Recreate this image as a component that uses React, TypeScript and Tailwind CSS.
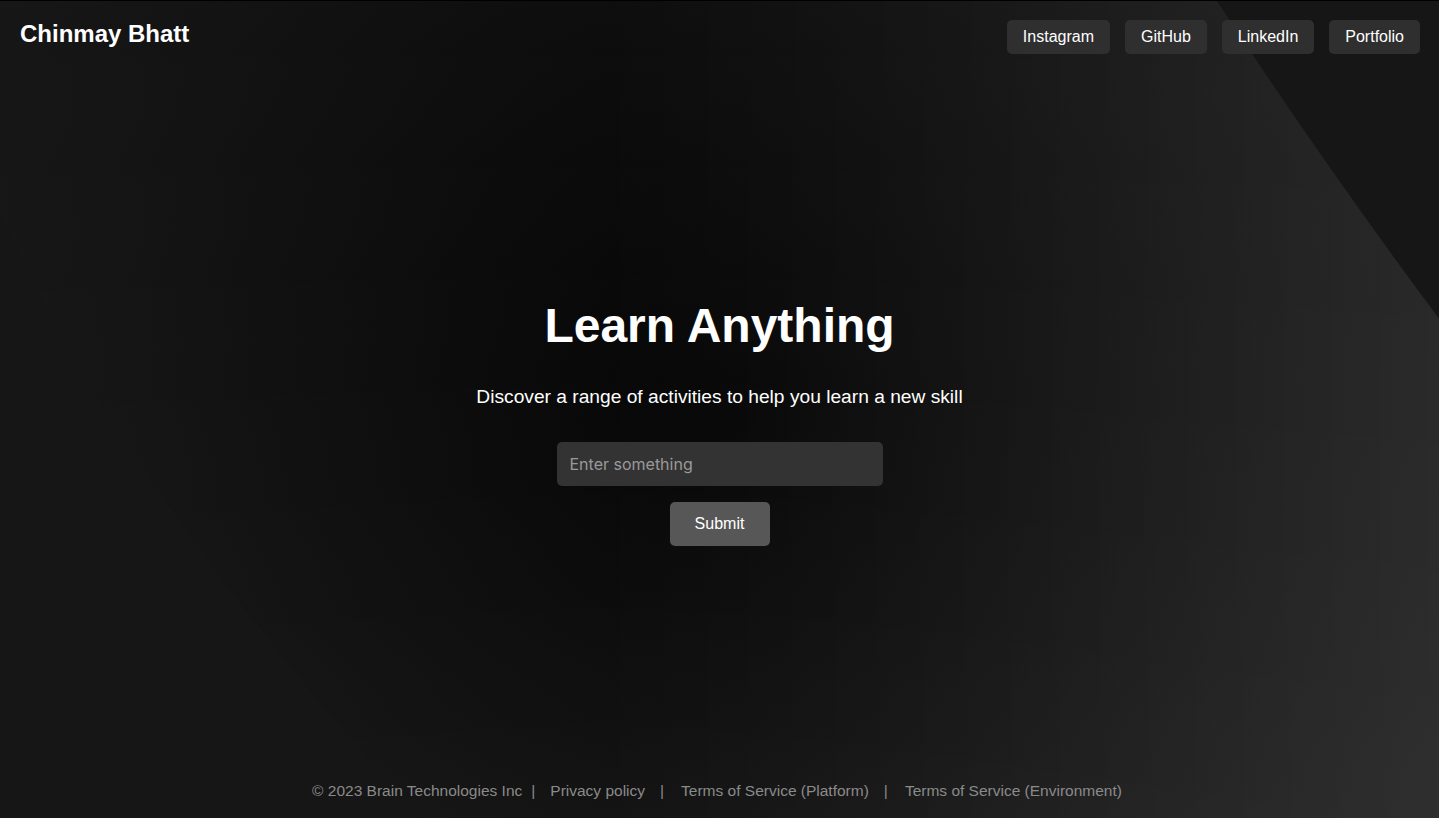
import React from "react";

function Background() {
  return (
    <svg
      className="pointer-events-none absolute inset-0 h-full w-full"
      viewBox="0 0 1439 818"
      preserveAspectRatio="none"
      aria-hidden="true"
    >
      <defs>
        <radialGradient id="rg" gradientUnits="userSpaceOnUse" cx="720" cy="430" r="1000">
          <stop offset="0" stopColor="#020202" />
          <stop offset="0.3" stopColor="#0a0a0a" />
          <stop offset="0.6" stopColor="#121212" />
          <stop offset="1" stopColor="#1a1a1a" />
        </radialGradient>
        <linearGradient id="lg" gradientUnits="userSpaceOnUse" x1="600" y1="0" x2="1439" y2="0">
          <stop offset="0" stopColor="#ffffff" stopOpacity="0" />
          <stop offset="1" stopColor="#ffffff" stopOpacity="0.08" />
        </linearGradient>
        <linearGradient id="lg2" gradientUnits="userSpaceOnUse" x1="0" y1="0" x2="0" y2="818">
          <stop offset="0" stopColor="#ffffff" stopOpacity="0" />
          <stop offset="1" stopColor="#ffffff" stopOpacity="0.03" />
        </linearGradient>
      </defs>
      <rect x="0" y="0" width="1439" height="818" fill="url(#rg)" />
      <rect x="0" y="0" width="1439" height="818" fill="url(#lg)" />
      <rect x="0" y="0" width="1439" height="818" fill="url(#lg2)" />
      <path d="M0,212 Q110,470 420,818 L0,818 Z" fill="#161616" />
      <path d="M1217,0 L1439,0 L1439,318 Q1325,165 1217,0 Z" fill="#161616" />
    </svg>
  );
}

const links = ["Instagram", "GitHub", "LinkedIn", "Portfolio"];

export default function App() {
  return (
    <div className="relative h-screen w-full overflow-hidden border-t border-black bg-[#111111] font-['Liberation_Sans',Arial,sans-serif] text-white">
      <Background />
      <div className="relative flex h-full flex-col">
        <header className="flex items-start justify-between pl-5 pr-[19px] pt-[19px]">
          <div className="pt-[2px] text-[24px] font-bold leading-[24px]">Chinmay Bhatt</div>
          <nav className="flex gap-[15px]">
            {links.map((l) => (
              <a
                key={l}
                href="#"
                className="flex h-[34px] items-center rounded-[5px] bg-[#2f2f2f] px-4 text-[16px] leading-[18px] text-white"
              >
                {l}
              </a>
            ))}
          </nav>
        </header>

        <main className="flex flex-1 flex-col items-center justify-center pt-[7px]">
          <h1 className="text-[48px] font-bold leading-[56px]">Learn Anything</h1>
          <p className="mt-[32px] text-[19.2px] leading-[22px]">
            Discover a range of activities to help you learn a new skill
          </p>
          <input
            type="text"
            placeholder="Enter something"
            className="mt-[34px] h-[44px] w-[326px] rounded-[5px] bg-[#333333] pl-[13px] pr-3 font-['Inter',sans-serif] text-[16px] text-white outline-none placeholder:text-[#9a9a9a]"
          />
          <button className="mt-4 h-[44px] w-[100px] rounded-[5px] bg-[#575757] text-[16px] text-white">
            Submit
          </button>
        </main>

        <footer className="flex justify-center pb-[19px] pr-[5px] text-[15.5px] leading-[17px] text-[#8a8a8a]">
          <span>© 2023 Brain Technologies Inc</span>
          <span className="ml-[9px] mr-[15px]">|</span>
          <a href="#">Privacy policy</a>
          <span className="ml-[15px] mr-[17px]">|</span>
          <a href="#">Terms of Service (Platform)</a>
          <span className="ml-[15px] mr-[17px]">|</span>
          <a href="#">Terms of Service (Environment)</a>
        </footer>
      </div>
    </div>
  );
}
